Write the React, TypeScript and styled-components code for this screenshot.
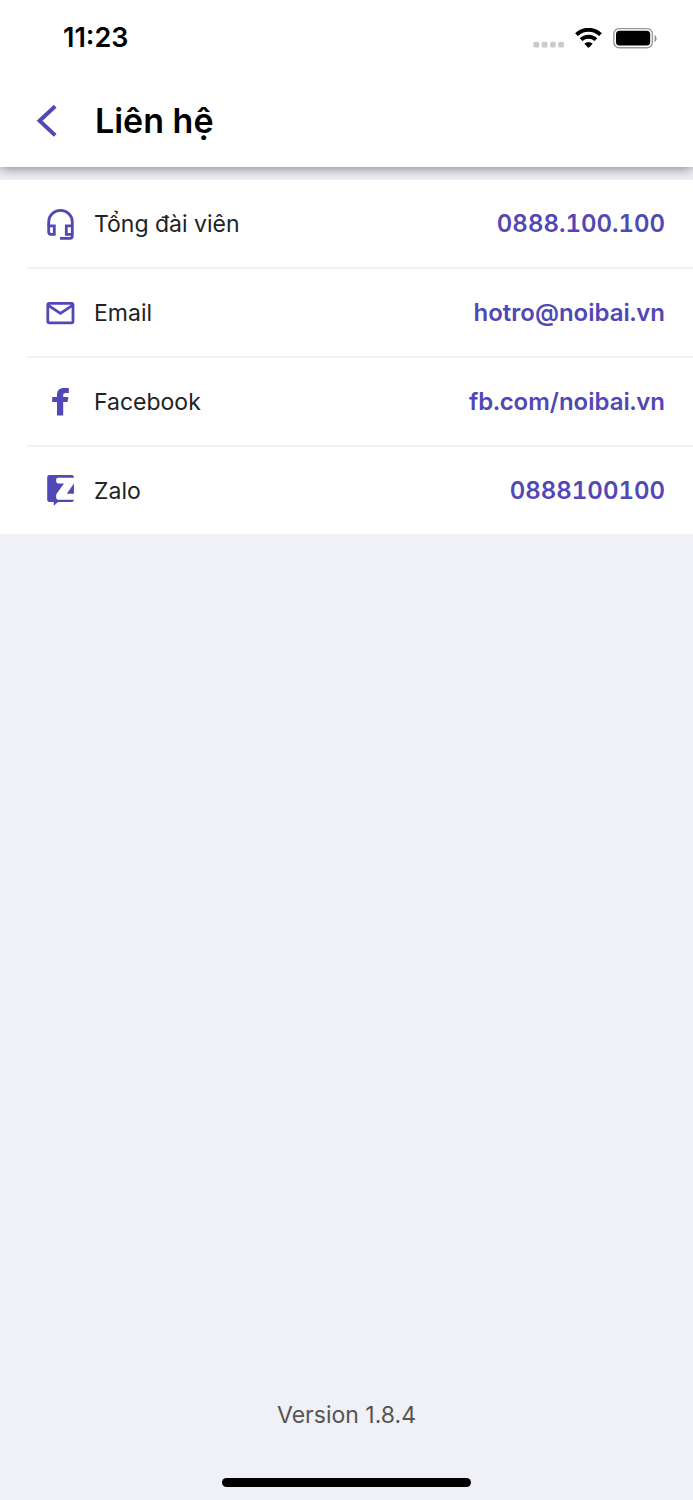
import React from "react";
import styled, { createGlobalStyle } from "styled-components";

const purple = "#5248b5";

const GlobalStyle = createGlobalStyle`
  *, *::before, *::after { box-sizing: border-box; }
  body {
    margin: 0;
    background: #f0f1f6;
    font-family: Inter, "Noto Sans", sans-serif;
  }
`;

const Screen = styled.div`
  display: flex;
  flex-direction: column;
  min-height: 100vh;
  background: #f0f1f6;
`;

const TopBar = styled.header`
  background: #ffffff;
  box-shadow: 0 1px 12px rgba(0, 0, 0, 0.5);
`;

const StatusBar = styled.div`
  display: flex;
  align-items: center;
  justify-content: space-between;
  height: 76px;
  padding: 0 36px 0 63px;
`;

const Clock = styled.time`
  font-size: 27px;
  line-height: 32px;
  font-weight: 600;
  color: #000000;
`;

const StatusIcons = styled.div`
  display: flex;
  align-items: center;
  gap: 11px;
`;

const TitleBar = styled.div`
  display: flex;
  align-items: center;
  height: 91px;
  padding: 0 28px 2px;
`;

const BackButton = styled.button`
  display: flex;
  align-items: center;
  width: 67px;
  height: 48px;
  padding: 0 8px;
  border: 0;
  background: none;
  cursor: pointer;
`;

const Title = styled.h1`
  margin: 0;
  font-size: 34px;
  line-height: 42px;
  font-weight: 600;
  color: #000000;
`;

const ContactList = styled.ul`
  list-style: none;
  margin: 13px 0 0;
  padding: 0;
  background: #ffffff;
  position: relative;
`;

const ContactRow = styled.li`
  padding-left: 27px;
`;

const RowBody = styled.div<{ $last: boolean }>`
  display: flex;
  align-items: center;
  padding: 28px 28px 28px 18px;
  border-bottom: ${(p) => (p.$last ? "0" : "2px solid #f1f2f6")};
`;

const ContactIcon = styled.svg`
  display: block;
  flex: none;
  width: 31px;
  height: 31px;
  margin-right: 18px;
  overflow: visible;
`;

const ContactLabel = styled.span`
  flex: 1;
  font-size: 23px;
  line-height: 30px;
  color: #222222;
`;

const ContactLink = styled.a`
  font-size: 24px;
  line-height: 30px;
  font-weight: 600;
  font-variant-numeric: tabular-nums;
  color: ${purple};
  text-decoration: none;
`;

const Footer = styled.footer`
  display: flex;
  flex-direction: column;
  align-items: center;
  gap: 48px;
  margin-top: auto;
  padding-bottom: 13px;
`;

const Version = styled.p`
  margin: 0;
  font-size: 23px;
  line-height: 30px;
  color: #555555;
`;

const HomeIndicator = styled.div`
  width: 36%;
  height: 9px;
  border-radius: 5px;
  background: #000000;
`;

const HeadsetIcon = () => (
  <ContactIcon viewBox="0 -1 31 31" fill="none" stroke={purple} strokeWidth="2.8" aria-hidden="true">
    <path d="M3.7 17V12.8a11.8 11.4 0 0 1 23.6 0V27.1a2.2 2.2 0 0 1-2.2 2.2H15" />
    <path d="M3.7 16.9H9.3V25.3H5.9a2.2 2.2 0 0 1-2.2-2.2Z" />
    <path d="M27.3 16.9H21.3V25.3H27.3" />
  </ContactIcon>
);

const MailIcon = () => (
  <ContactIcon viewBox="0 -1 31 31" fill="none" stroke={purple} strokeWidth="2.8" aria-hidden="true">
    <rect x="2.8" y="5.3" width="25.2" height="19.6" rx="1.6" />
    <path d="M3 7.2L15.4 15.4L27.8 7.2" />
  </ContactIcon>
);

const FacebookIcon = () => (
  <ContactIcon viewBox="0 -1 31 31" fill={purple} aria-hidden="true">
    <path d="M12 28.4V15H7.2V10H12V8.2C12 3.4 14.4 1 19.2 1H23.8V6H20.8C18.9 6 18.2 6.8 18.2 8.4V10H23.4L22.6 15H18.2V28.4Z" />
  </ContactIcon>
);

const ZaloIcon = () => (
  <ContactIcon viewBox="0 0 31 31" aria-hidden="true">
    <path
      d="M4.5 0H26.7a2.2 2.2 0 0 1 2.2 2.2V24.8a2.2 2.2 0 0 1-2.2 2.2H13L8.8 30.7V27H4.5A2.3 2.3 0 0 1 2.2 24.7V2.3A2.3 2.3 0 0 1 4.5 0Z"
      fill={purple}
    />
    <path
      d="M13 2.8H29.2V8L21.8 18.7H29.2V24.7H13.2A2 2 0 0 1 11.2 22.7V20.2Q11.2 19.3 11.8 18.5L19 8.4H13A1.8 1.8 0 0 1 11.2 6.6V4.6A1.8 1.8 0 0 1 13 2.8Z"
      fill="#ffffff"
    />
  </ContactIcon>
);

const contacts = [
  { Icon: HeadsetIcon, label: "Tổng đài viên", value: "0888.100.100", href: "tel:0888100100" },
  { Icon: MailIcon, label: "Email", value: "hotro@noibai.vn", href: "mailto:hotro@noibai.vn" },
  { Icon: FacebookIcon, label: "Facebook", value: "fb.com/noibai.vn", href: "https://fb.com/noibai.vn" },
  { Icon: ZaloIcon, label: "Zalo", value: "0888100100", href: "https://zalo.me/0888100100" },
];

export default function App() {
  return (
    <Screen>
      <GlobalStyle />
      <TopBar>
        <StatusBar>
          <Clock>11:23</Clock>
          <StatusIcons>
            <svg width="31" height="20" viewBox="0 0 31 20" fill="#cbcbcb" aria-hidden="true">
              <rect x="0.4" y="13.7" width="5.8" height="5.8" rx="1.6" />
              <rect x="8.7" y="13.7" width="5.8" height="5.8" rx="1.6" />
              <rect x="17" y="13.7" width="5.8" height="5.8" rx="1.6" />
              <rect x="25.2" y="13.7" width="5.8" height="5.8" rx="1.6" />
            </svg>
            <svg width="27" height="20" viewBox="0 0 27 20" aria-hidden="true">
              <g fill="none" stroke="#000000" strokeWidth="4">
                <path d="M1.5 6.6a17.4 17.4 0 0 1 24 0" />
                <path d="M6.1 11.6a10.7 10.7 0 0 1 14.8 0" />
              </g>
              <path d="M9.3 15.7a6 6 0 0 1 8.4 0L13.5 19.9Z" fill="#000000" />
            </svg>
            <svg width="44" height="21" viewBox="0 0 44 21" aria-hidden="true">
              <rect x="0.8" y="0.6" width="38.6" height="19.2" rx="5.5" fill="none" stroke="#9a9a9a" strokeWidth="1.4" />
              <rect x="3" y="2.8" width="34.2" height="14.8" rx="3.6" fill="#000000" />
              <path d="M41.6 7c2.6 1 2.6 6 0 7Z" fill="#8e8e8e" />
            </svg>
          </StatusIcons>
        </StatusBar>
        <TitleBar>
          <BackButton type="button" aria-label="Quay lại">
            <svg width="22" height="34" viewBox="0 0 22 34" fill="none" stroke={purple} strokeWidth="4" aria-hidden="true">
              <path d="M19.2 2.2L3.6 16.8L19.2 31.4" />
            </svg>
          </BackButton>
          <Title>Liên hệ</Title>
        </TitleBar>
      </TopBar>
      <ContactList>
        {contacts.map(({ Icon, label, value, href }, i) => (
          <ContactRow key={label}>
            <RowBody $last={i === contacts.length - 1}>
              <Icon />
              <ContactLabel>{label}</ContactLabel>
              <ContactLink href={href}>{value}</ContactLink>
            </RowBody>
          </ContactRow>
        ))}
      </ContactList>
      <Footer>
        <Version>Version 1.8.4</Version>
        <HomeIndicator />
      </Footer>
    </Screen>
  );
}
